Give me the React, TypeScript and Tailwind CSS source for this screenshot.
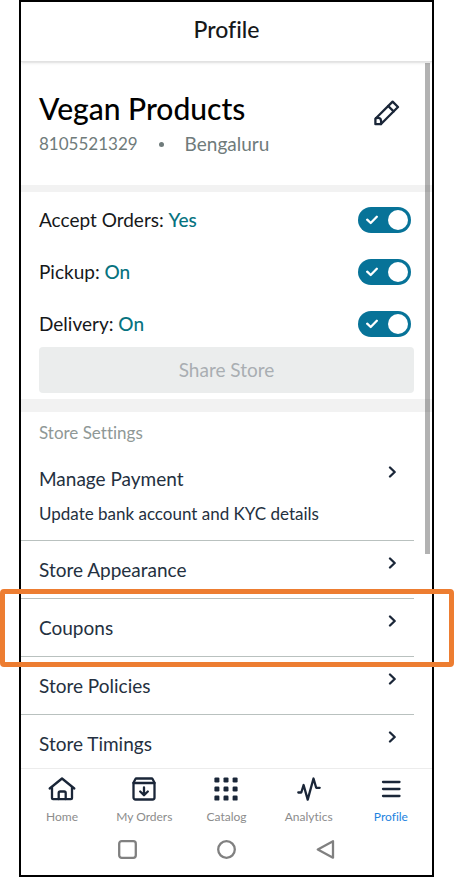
import React from "react";

const toggles = [
  { id: "accept-orders", label: "Accept Orders:", on: "Yes", off: "No" },
  { id: "pickup", label: "Pickup:", on: "On", off: "Off" },
  { id: "delivery", label: "Delivery:", on: "On", off: "Off" },
];

const settings = [
  { title: "Manage Payment", detail: "Update bank account and KYC details" },
  { title: "Store Appearance" },
  { title: "Coupons" },
  { title: "Store Policies" },
  { title: "Store Timings" },
];

function PencilIcon() {
  return (
    <svg width="26" height="26" viewBox="0 0 26 26" fill="none" stroke="#1a2638" strokeWidth="2.3" strokeLinejoin="round" strokeLinecap="round">
      <path d="M1.4 18.8 18.6 1.6 24 7 6.800 24.200H1.400Z" />
      <path d="M14.200 6 19.600 11.400M2 18.200Q5.500 17.200 6.500 18.900T7 24" />
    </svg>
  );
}

function ChevronIcon() {
  return (
    <svg width="12" height="12" viewBox="0 0 12 12" fill="none" stroke="#1a2638" strokeWidth="2.3" strokeLinejoin="round" strokeLinecap="round">
      <path d="M4 1.5 8.700 6 4 10.500" />
    </svg>
  );
}

function HomeIcon() {
  return (
    <svg width="28" height="24" viewBox="0 0 28 24" fill="none" stroke="#1a2638" strokeWidth="2.3" strokeLinejoin="round" strokeLinecap="round">
      <path d="M1.7 11.5 14 1.500 26.300 11.500" />
      <path d="M4 10.500V21.200a1 1 0 0 0 1 1H23a1 1 0 0 0 1-1V10.500" />
      <path d="M10.700 22V16a1.500 1.500 0 0 1 1.500-1.500H16.200a1.500 1.500 0 0 1 1.500 1.500V22" />
    </svg>
  );
}

function OrdersIcon() {
  return (
    <svg width="24" height="24" viewBox="0 0 24 24" fill="none" stroke="#1a2638" strokeWidth="2.3" strokeLinejoin="round" strokeLinecap="round">
      <path d="M1.500 5.700 3.300 2.200a1.300 1.300 0 0 1 1.200-.7H19.500a1.300 1.300 0 0 1 1.200.7L22.500 5.700V20.500a2 2 0 0 1-2 2H3.500a2 2 0 0 1-2-2Z" />
      <path d="M1.500 6H22.500M12 10.500V18M8.200 14.500 12 18.200 15.800 14.500" />
    </svg>
  );
}

function CatalogIcon() {
  return (
    <svg width="24" height="24" viewBox="0 0 24 24" fill="#1a2638">
      {[0.4, 9.5, 18.6].map((y) =>
        [0.4, 9.5, 18.6].map((x) => <rect key={`${x}-${y}`} x={x} y={y} width="5" height="5" rx="1.200" />)
      )}
    </svg>
  );
}

function AnalyticsIcon() {
  return (
    <svg width="24" height="24" viewBox="0 0 24 24" fill="none" stroke="#1a2638" strokeWidth="2.3" strokeLinejoin="round" strokeLinecap="round">
      <path d="M1.300 15.500H4.300L6.600 8 10.700 22.600 16.500 1.500 19.200 10.800H22.700" />
    </svg>
  );
}

function MenuIcon() {
  return (
    <svg width="24" height="24" viewBox="0 0 24 24" fill="none" stroke="#1a2638" strokeWidth="2.3" strokeLinecap="round">
      <path d="M4 5H20.500M4 12H20.500M4 19H20.500" />
    </svg>
  );
}

const tabs = [
  { label: "Home", icon: HomeIcon },
  { label: "My Orders", icon: OrdersIcon },
  { label: "Catalog", icon: CatalogIcon },
  { label: "Analytics", icon: AnalyticsIcon },
  { label: "Profile", icon: MenuIcon, active: true },
];

function ToggleRow({ id, label, on, off }: { id: string; label: string; on: string; off: string }) {
  const [checked, setChecked] = React.useState(true);

  return (
    <div className="flex h-[26px] items-center justify-between pr-[3px]">
      <label htmlFor={id} className="text-[19px] leading-[26px] text-[#16181a]">
        {label} <span className="font-medium text-[#06737f]">{checked ? on : off}</span>
      </label>
      <div className="relative h-[26px] w-[53px]">
        <input
          id={id}
          type="checkbox"
          role="switch"
          checked={checked}
          onChange={(e) => setChecked(e.target.checked)}
          className="peer block h-full w-full cursor-pointer appearance-none rounded-full bg-gray-400 checked:bg-[#077398]"
        />
        <svg className="pointer-events-none absolute top-2 left-2 opacity-0 peer-checked:opacity-100" width="12" height="10" viewBox="0 0 12 10" fill="none" stroke="#fff" strokeWidth="2.3" strokeLinecap="round" strokeLinejoin="round">
          <path d="M1.200 4.700 4.700 8 10.800 1.800" />
        </svg>
        <span className="pointer-events-none absolute top-[3px] left-1 h-5 w-5 rounded-full bg-white peer-checked:left-[30px]" />
      </div>
    </div>
  );
}

export default function App() {
  return (
    <div className="relative h-screen bg-white pr-5 pl-[19px] font-['Lato','Open_Sans',sans-serif] [font-variant-ligatures:none]">
      <div className="flex h-full flex-col border-2 border-black">
        <header className="z-10 flex h-[60px] shrink-0 items-center justify-center border-b border-[#e2e2e2] bg-white pb-1 shadow-sm">
          <h1 className="text-[23px] font-medium text-[#16181a]">Profile</h1>
        </header>

        <main className="relative min-h-0 flex-1 overflow-hidden">
          <section className="flex items-start justify-between border-b-[7px] border-[#f2f2f2] pt-7 pr-8 pb-[29px] pl-[18px]">
            <div>
              <h2 className="text-[30px] leading-9 font-medium text-black">Vegan Products</h2>
              <p className="mt-1.5 flex items-center leading-6 text-[#6f7b7b]">
                <span className="text-[17px]">8105521329</span>
                <span className="mx-[21px] h-[5px] w-[5px] rounded-full bg-[#6f7b7b]" />
                <span className="text-[19px]">Bengaluru</span>
              </p>
            </div>
            <button type="button" aria-label="Edit store" className="mt-2.5">
              <PencilIcon />
            </button>
          </section>

          <section className="border-b-[13px] border-[#f2f2f2] px-[18px] pt-[15px] pb-1.5">
            <div className="flex flex-col gap-[26px]">
              {toggles.map((t) => (
                <ToggleRow key={t.id} {...t} />
              ))}
            </div>
            <button type="button" disabled className="mt-2.5 h-[46px] w-full rounded bg-[#ebeded] text-[19px] text-[#a9aeb2]">
              Share Store
            </button>
          </section>

          <section className="pr-[18px]">
            <h3 className="pt-2.5 pb-1.5 pl-[18px] text-[17px] leading-[22px] text-[#8f9896]">Store Settings</h3>
            <ul>
              {settings.map((s) => (
                <li key={s.title} className="border-b border-[#b9c1bf]">
                  <a href="#" className="flex items-start justify-between pt-4 pr-4 pb-[15px] pl-[18px] text-[#243040]">
                    <div>
                      <div className="text-[19px] leading-[26px]">{s.title}</div>
                      {s.detail && <div className="mt-2.5 text-[17px] leading-[23px]">{s.detail}</div>}
                    </div>
                    <ChevronIcon />
                  </a>
                </li>
              ))}
            </ul>
          </section>

          {/* scroll thumb */}
          <div className="absolute top-px right-0.5 h-[491px] w-[5px] bg-black/30" />
        </main>

        <footer className="shrink-0 border-t border-[#ececec] bg-white">
          <nav className="grid grid-cols-5 pt-2">
            {tabs.map(({ label, icon: Icon, active }) => (
              <a key={label} href="#" className="flex flex-col items-center gap-2">
                <Icon />
                <span className={active ? "text-xs leading-4 text-[#1e83e0]" : "text-xs leading-4 text-[#8c8c8c]"}>{label}</span>
              </a>
            ))}
          </nav>
          <div className="flex justify-center gap-20 pt-[15px] pb-4">
            <button type="button" aria-label="Recent apps">
              <svg width="19" height="19" viewBox="0 0 19 19" fill="none" stroke="#808080" strokeWidth="2.3">
                <rect x="1.200" y="1.200" width="16.600" height="16.600" rx="2.500" />
              </svg>
            </button>
            <button type="button" aria-label="Home screen">
              <svg width="19" height="19" viewBox="0 0 19 19" fill="none" stroke="#808080" strokeWidth="2.3">
                <circle cx="9.500" cy="9.500" r="8.300" />
              </svg>
            </button>
            <button type="button" aria-label="Back">
              <svg width="19" height="19" viewBox="0 0 19 19" fill="none" stroke="#808080" strokeWidth="2.3" strokeLinejoin="round">
                <path d="M17 1.300V17.700L1.800 9.500Z" />
              </svg>
            </button>
          </div>
        </footer>
      </div>

      {/* callout around the Coupons row */}
      <div className="pointer-events-none absolute inset-x-0 top-[589px] z-20 h-[78px] rounded-[4px] border-[5px] border-[#ed7d31]" />
    </div>
  );
}
